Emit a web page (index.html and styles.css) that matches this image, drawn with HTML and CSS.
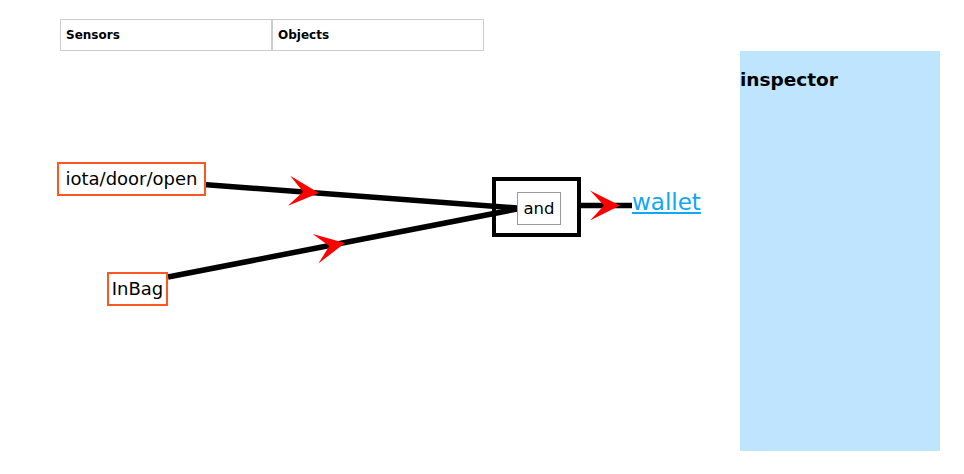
FILE: index.html
```html
<!DOCTYPE html>
<html lang="en">
<head>
  <meta charset="UTF-8">
  <title>Flow editor</title>
  <link rel="stylesheet" href="styles.css">
</head>
<body>
  <div class="workspace">
    <div class="tabs">
      <div class="tab">Sensors</div>
      <div class="tab">Objects</div>
    </div>
    <div class="canvas">
      <svg class="wires" width="740" height="400" viewBox="0 0 740 400">
        <line x1="131" y1="128" x2="517" y2="157" />
        <line x1="168" y1="226" x2="517" y2="158" />
        <line x1="581" y1="154.5" x2="632" y2="154.5" />
        <path class="arrow" d="M0,0 L-30,-15 L-16,0 L-30,15 Z" transform="translate(319 142) rotate(4.3)" />
        <path class="arrow" d="M0,0 L-30,-15 L-16,0 L-30,15 Z" transform="translate(345 192) rotate(-11)" />
        <path class="arrow" d="M0,0 L-30,-15 L-16,0 L-30,15 Z" transform="translate(620 154.5)" />
      </svg>
      <div class="node node-door">iota/door/open</div>
      <div class="node node-bag">InBag</div>
      <div class="gate">
        <div class="gate-label">and</div>
      </div>
      <a class="target" href="#">wallet</a>
    </div>
  </div>
  <div class="inspector">
    <h2>inspector</h2>
  </div>
</body>
</html>
```

FILE: styles.css
```css
body {
  margin: 0;
  padding: 0;
  font-family: 'DejaVu Sans', 'Liberation Sans', sans-serif;
  background: #fff;
  color: #000;
  display: flex;
  align-items: flex-start;
}

.workspace {
  width: 740px;
  flex: none;
}

.tabs {
  display: flex;
  margin: 19px 0 0 60px;
}

.tab {
  width: 212px;
  height: 32px;
  box-sizing: border-box;
  border: 1px solid #ccc;
  padding-left: 5px;
  font-size: 12px;
  font-weight: bold;
  line-height: 30px;
}

.canvas {
  position: relative;
  height: 400px;
}

.wires {
  position: absolute;
  left: 0;
  top: 0;
}

.wires line {
  stroke: #000;
  stroke-width: 5.5;
}

.wires .arrow {
  fill: #ff0000;
}

.node {
  position: absolute;
  height: 34px;
  box-sizing: border-box;
  border: 2px solid #ff5722;
  background: #fff;
  font-size: 18px;
  line-height: 30px;
  text-align: center;
}

.node-door {
  left: 57px;
  top: 111px;
  width: 149px;
}

.node-bag {
  left: 107px;
  top: 221px;
  width: 61px;
}

.gate {
  position: absolute;
  left: 492px;
  top: 126px;
  width: 89px;
  height: 60px;
  box-sizing: border-box;
  border: 4px solid #000;
  padding: 11px 16px 8px 21px;
}

.gate-label {
  width: 44px;
  height: 33px;
  box-sizing: border-box;
  border: 1px solid #999;
  background: #fff;
  font-size: 16.5px;
  line-height: 31px;
  text-align: center;
}

.target {
  position: absolute;
  left: 632px;
  top: 138px;
  font-size: 23px;
  color: #12a6f7;
  text-decoration: underline;
}

.inspector {
  width: 200px;
  height: 400px;
  margin-top: 51px;
  flex: none;
  background: #bee4fe;
  box-sizing: border-box;
  padding-top: 18px;
}

.inspector h2 {
  margin: 0;
  font-size: 18.5px;
  line-height: 22px;
}
```
